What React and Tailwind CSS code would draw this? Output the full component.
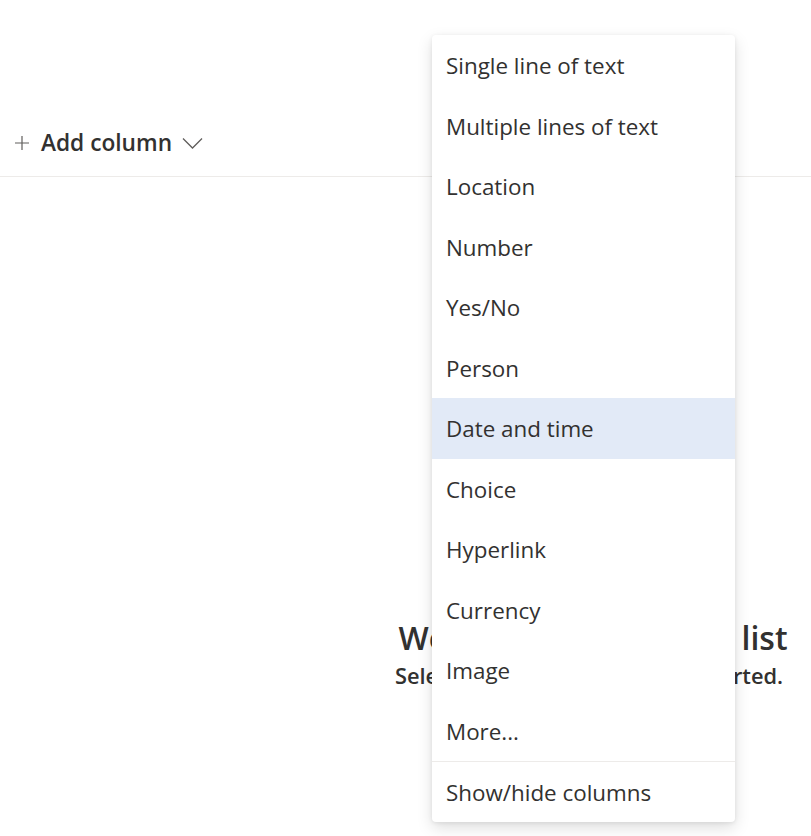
import React from "react";

const items = [
  "Single line of text",
  "Multiple lines of text",
  "Location",
  "Number",
  "Yes/No",
  "Person",
  "Date and time",
  "Choice",
  "Hyperlink",
  "Currency",
  "Image",
  "More...",
];

export default function App() {
  return (
    <div
      className="relative w-[811px] h-[836px] bg-white overflow-hidden text-[#323130]"
      style={{ fontFamily: '"Open Sans", "Noto Sans", sans-serif' }}
    >
      <div className="h-[177px] border-b border-[#edebe9] flex items-end pb-[15px] pl-[14px]">
        <div className="flex items-center h-[36px]">
          <svg width="16" height="16" viewBox="0 0 16 16" className="mr-[11px]">
            <path d="M8 1v14M1 8h14" stroke="#605e5c" strokeWidth="1.2" fill="none" />
          </svg>
          <span className="text-[22.7px] font-semibold">Add column</span>
          <svg width="21" height="12" viewBox="0 0 21 12" className="ml-[10px]">
            <path d="M1 1.5l9.5 9.5 9.5-9.5" stroke="#605e5c" strokeWidth="1.3" fill="none" />
          </svg>
        </div>
      </div>

      <div className="flex flex-col items-center pl-[375px] pt-[441px]">
        <div className="text-[32px] font-semibold leading-[40px] whitespace-nowrap">Welcome to your new list</div>
        <div className="text-[21.8px] font-semibold leading-[26px] mt-[5px] whitespace-nowrap -ml-[8px]">Select the New button to get started.</div>
      </div>

      <div className="absolute left-[432px] top-[35px] w-[303px] bg-white rounded-[4px] shadow-[0_6px_16px_rgba(0,0,0,0.13),0_1px_4px_rgba(0,0,0,0.08)]">
        {items.map((t) => (
          <div
            key={t}
            className={
              "h-[60.5px] flex items-center pl-[14px] pt-[2px] text-[22.4px] " +
              (t === "Date and time" ? "bg-[#e2eaf7]" : "")
            }
          >
            {t}
          </div>
        ))}
        <div className="h-[1px] bg-[#edebe9]" />
        <div className="h-[60px] flex items-center pl-[14px] pt-[2px] text-[22.4px]">Show/hide columns</div>
      </div>
    </div>
  );
}
